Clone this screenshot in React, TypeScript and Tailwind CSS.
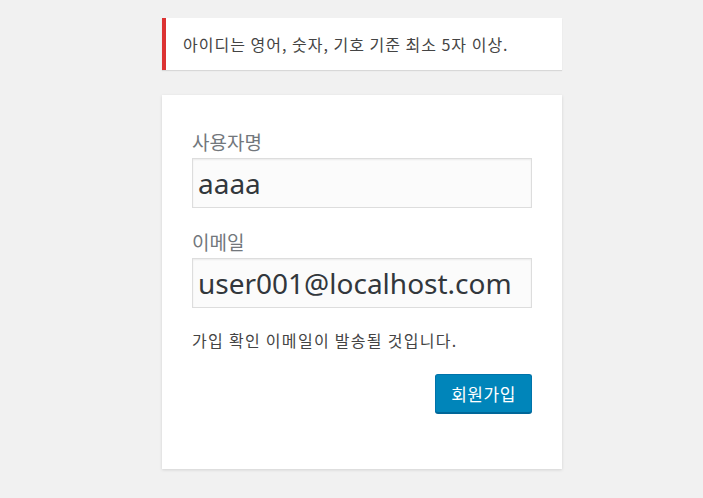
export default function App() {
  const ko = { fontFamily: '"Noto Sans CJK KR", "Noto Sans", sans-serif' };
  const latin = { fontFamily: '"Noto Sans", "Noto Sans CJK KR", sans-serif' };
  return (
    <div className="min-h-[498px] bg-[#f1f1f1] pt-[18px]" style={ko}>
      <div className="ml-[162px] w-[400px]">
        <div className="border-l-4 border-[#dc3232] bg-white py-[15px] pl-[17px] pr-[15px] text-[16px] leading-[22px] tracking-[1px] text-[#444] shadow-[0_1px_1px_0_rgba(0,0,0,0.1)]">
          아이디는 영어, 숫자, 기호 기준 최소 5자 이상.
        </div>

        <form className="mt-[25px] bg-white px-[30px] pt-[34px] pb-[56px] shadow-[0_1px_3px_rgba(0,0,0,0.13)]">
          <label className="block text-[19px] leading-[26px] text-[#72777c]">사용자명</label>
          <input
            type="text"
            defaultValue="aaaa"
            style={latin}
            className="mt-[3px] block h-[50px] w-full border border-[#ddd] bg-[#fbfbfb] px-[5px] text-[28px] text-[#32373c] shadow-[inset_0_1px_2px_rgba(0,0,0,0.07)] outline-none"
          />

          <label className="mt-[21px] block text-[19px] leading-[26px] text-[#72777c]">이메일</label>
          <input
            type="text"
            defaultValue="user001@localhost.com"
            style={latin}
            className="mt-[3px] block h-[50px] w-full border border-[#ddd] bg-[#fbfbfb] px-[5px] text-[28px] text-[#32373c] shadow-[inset_0_1px_2px_rgba(0,0,0,0.07)] outline-none"
          />

          <p className="mt-[18px] text-[16px] leading-[28px] tracking-[1.3px] text-[#444]">가입 확인 이메일이 발송될 것입니다.</p>

          <div className="mt-[20px] flex justify-end">
            <button
              type="button"
              className="h-[39px] w-[97px] rounded-[3px] border border-[#0073aa] border-b-[#006799] bg-[#0085ba] text-[17px] tracking-[0.5px] text-white shadow-[0_1px_0_#006799]"
            >
              회원가입
            </button>
          </div>
        </form>
      </div>
    </div>
  );
}
